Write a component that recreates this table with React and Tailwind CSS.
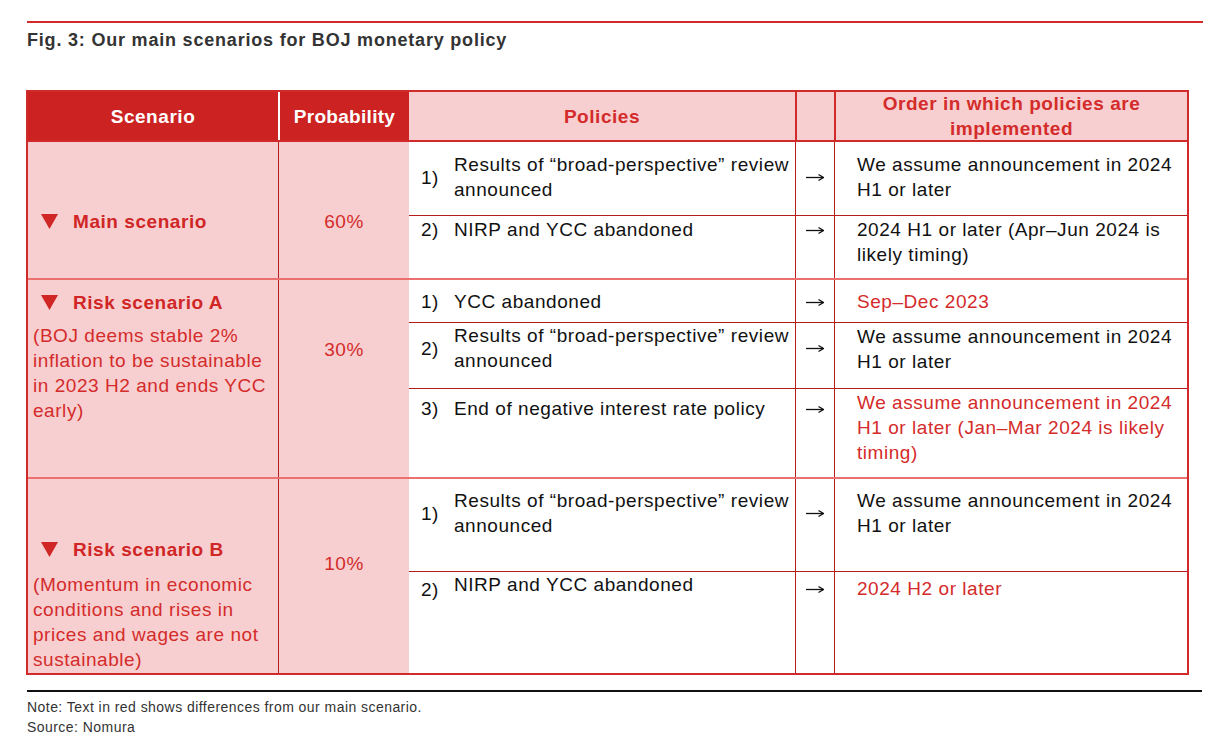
const PINK = "bg-[#f7cfd0]";

const groups = [
  {
    label: "Main scenario",
    labelPt: "pt-[67px]",
    desc: [],
    descMt: "",
    prob: "60%",
    probPt: "pt-[67px]",
    first: true,
    rows: [
      {
        h: "h-[73px]",
        pt: "pt-[10px]",
        n: "1)",
        policy: ["Results of \u201cbroad-perspective\u201d review", "announced"],
        arrowPt: "pt-[10px]",
        orderPt: "pt-[10px]",
        order: ["We assume announcement in 2024", "H1 or later"],
      },
      {
        h: "h-[63px]",
        pt: "pt-[1px]",
        n: "2)",
        policy: ["NIRP and YCC abandoned"],
        arrowPt: "pt-[1px]",
        orderPt: "pt-[1px]",
        order: ["2024 H1 or later (Apr\u2013Jun 2024 is", "likely timing)"],
      },
    ],
  },
  {
    label: "Risk scenario A",
    labelPt: "pt-[10px]",
    desc: [
      "(BOJ deems stable 2%",
      "inflation to be sustainable",
      "in 2023 H2 and ends YCC",
      "early)",
    ],
    descMt: "mt-[8px]",
    prob: "30%",
    probPt: "pt-[57px]",
    rows: [
      {
        h: "h-[42px]",
        pt: "pt-[9px]",
        n: "1)",
        policy: ["YCC abandoned"],
        arrowPt: "pt-[9px]",
        orderPt: "pt-[9px]",
        order: ["Sep\u2013Dec 2023"],
        red: true,
      },
      {
        h: "h-[66px]",
        pt: "pt-0",
        n: "2)",
        policy: ["Results of \u201cbroad-perspective\u201d review", "announced"],
        arrowPt: "pt-0",
        orderPt: "pt-[1px]",
        order: ["We assume announcement in 2024", "H1 or later"],
      },
      {
        h: "h-[89px]",
        pt: "pt-[7px]",
        n: "3)",
        policy: ["End of negative interest rate policy"],
        arrowPt: "pt-[7px]",
        orderPt: "pt-[1px]",
        order: [
          "We assume announcement in 2024",
          "H1 or later (Jan\u2013Mar 2024 is likely",
          "timing)",
        ],
        red: true,
      },
    ],
  },
  {
    label: "Risk scenario B",
    labelPt: "pt-[58px]",
    desc: [
      "(Momentum in economic",
      "conditions and rises in",
      "prices and wages are not",
      "sustainable)",
    ],
    descMt: "mt-[10px]",
    prob: "10%",
    probPt: "pt-[72px]",
    rows: [
      {
        h: "h-[92px]",
        pt: "pt-[9px]",
        n: "1)",
        policy: ["Results of \u201cbroad-perspective\u201d review", "announced"],
        arrowPt: "pt-[9px]",
        orderPt: "pt-[9px]",
        order: ["We assume announcement in 2024", "H1 or later"],
      },
      {
        h: "h-[102px]",
        pt: "pt-0",
        n: "2)",
        numMt: "mt-[5px]",
        policy: ["NIRP and YCC abandoned"],
        arrowPt: "pt-[4px]",
        orderPt: "pt-[4px]",
        order: ["2024 H2 or later"],
        red: true,
      },
    ],
  },
];

function Triangle() {
  return (
    <svg width="17" height="15" viewBox="0 0 17 15" className="shrink-0">
      <polygon points="0,0 17,0 8.5,15" fill="#d02626" />
    </svg>
  );
}

// thin right arrow as in the source figure
function Arrow() {
  return (
    <svg width="18" height="10" viewBox="0 0 18 10">
      <path d="M0 5.5H17" stroke="#111" strokeWidth="1.3" />
      <path d="M12.5 2.5L17.5 5.5L12.5 8.5" fill="none" stroke="#111" strokeWidth="1.2" />
    </svg>
  );
}

function Lines({ lines }) {
  return lines.map((l, i) => <div key={i}>{l}</div>);
}

function SubRow({ row, first }) {
  const twoLines = row.policy.length > 1;
  return (
    <div className={`flex ${row.h} ${first ? "" : "border-t border-[#b51c1c]"}`}>
      <div className={`w-[386px] pl-[12px] flex ${row.pt} ${twoLines ? "items-center self-start" : "items-start"}`}>
        <span className={`w-[33px] shrink-0 ${row.numMt || ""}`}>{row.n}</span>
        <div>
          <Lines lines={row.policy} />
        </div>
      </div>
      <div className={`w-[39px] border-l border-[#b51c1c] ${row.arrowPt}`}>
        <div className={`flex items-center justify-center ${twoLines ? "h-[50px]" : "h-[25px]"}`}>
          <Arrow />
        </div>
      </div>
      <div
        className={`flex-1 border-l border-[#b51c1c] pl-[22px] ${row.orderPt} ${
          row.red ? "text-[#d42b2b]" : ""
        }`}
      >
        <Lines lines={row.order} />
      </div>
    </div>
  );
}

export default function App() {
  return (
    <div className="w-[1231px] h-[755px] bg-white pt-[21px] pl-[27px] font-['Liberation_Sans',Arial,sans-serif]">
      <div className="h-[2px] w-[1176px] bg-[#d12a2a]" />
      <div className="mt-[7px] leading-[20px] text-[18px] font-bold tracking-[0.8px] text-[#333]">
        Fig. 3: Our main scenarios for BOJ monetary policy
      </div>

      {/* Table */}
      <div className="mt-[40px] -ml-[1px] w-[1163px] border-2 border-[#d12a2a] text-[19px] leading-[25px] tracking-[0.55px] text-[#111]">
        {/* Header */}
        <div className="flex h-[50px] border-b-2 border-[#d12a2a] font-bold">
          <div className="w-[250px] bg-[#cc2222] text-white flex items-center justify-center">
            Scenario
          </div>
          <div className="w-[131px] bg-[#cc2222] text-white border-l-2 border-white flex items-center justify-center tracking-[0.3px]">
            Probability
          </div>
          <div className={`w-[386px] ${PINK} text-[#d42b2b] flex items-center justify-center`}>
            Policies
          </div>
          <div className={`w-[39px] ${PINK} border-l-2 border-[#d12a2a]`} />
          <div className={`flex-1 ${PINK} border-l-2 border-[#d12a2a] text-[#d42b2b] flex flex-col items-center justify-center`}>
            <div>Order in which policies are</div>
            <div>implemented</div>
          </div>
        </div>

        {/* Body */}
        {groups.map((g) => (
          <div
            key={g.label}
            className={`flex ${g.first ? "" : "border-t-2 border-[#eb7171]"}`}
          >
            <div className={`w-[250px] ${PINK} ${g.labelPt} text-[#d42b2b]`}>
              <div className="flex items-center pl-[13px] font-bold text-[#d02626]">
                <Triangle />
                <span className="ml-[15px]">{g.label}</span>
              </div>
              {g.desc.length > 0 && (
                <div className={`pl-[5px] ${g.descMt}`}>
                  <Lines lines={g.desc} />
                </div>
              )}
            </div>
            <div className={`w-[131px] ${PINK} border-l border-[#b51c1c] text-center text-[#d42b2b] ${g.probPt}`}>
              {g.prob}
            </div>
            <div className="flex-1 flex flex-col">
              {g.rows.map((r, i) => (
                <SubRow key={i} row={r} first={i === 0} />
              ))}
            </div>
          </div>
        ))}
      </div>

      <div className="mt-[15px] h-[2px] w-[1175px] bg-[#111]" />
      <div className="mt-[5px] text-[14px] leading-[20px] tracking-[0.45px] text-[#333]">
        Note: Text in red shows differences from our main scenario.
      </div>
      <div className="text-[14px] leading-[21px] tracking-[0.45px] text-[#333]">
        Source: Nomura
      </div>
    </div>
  );
}
